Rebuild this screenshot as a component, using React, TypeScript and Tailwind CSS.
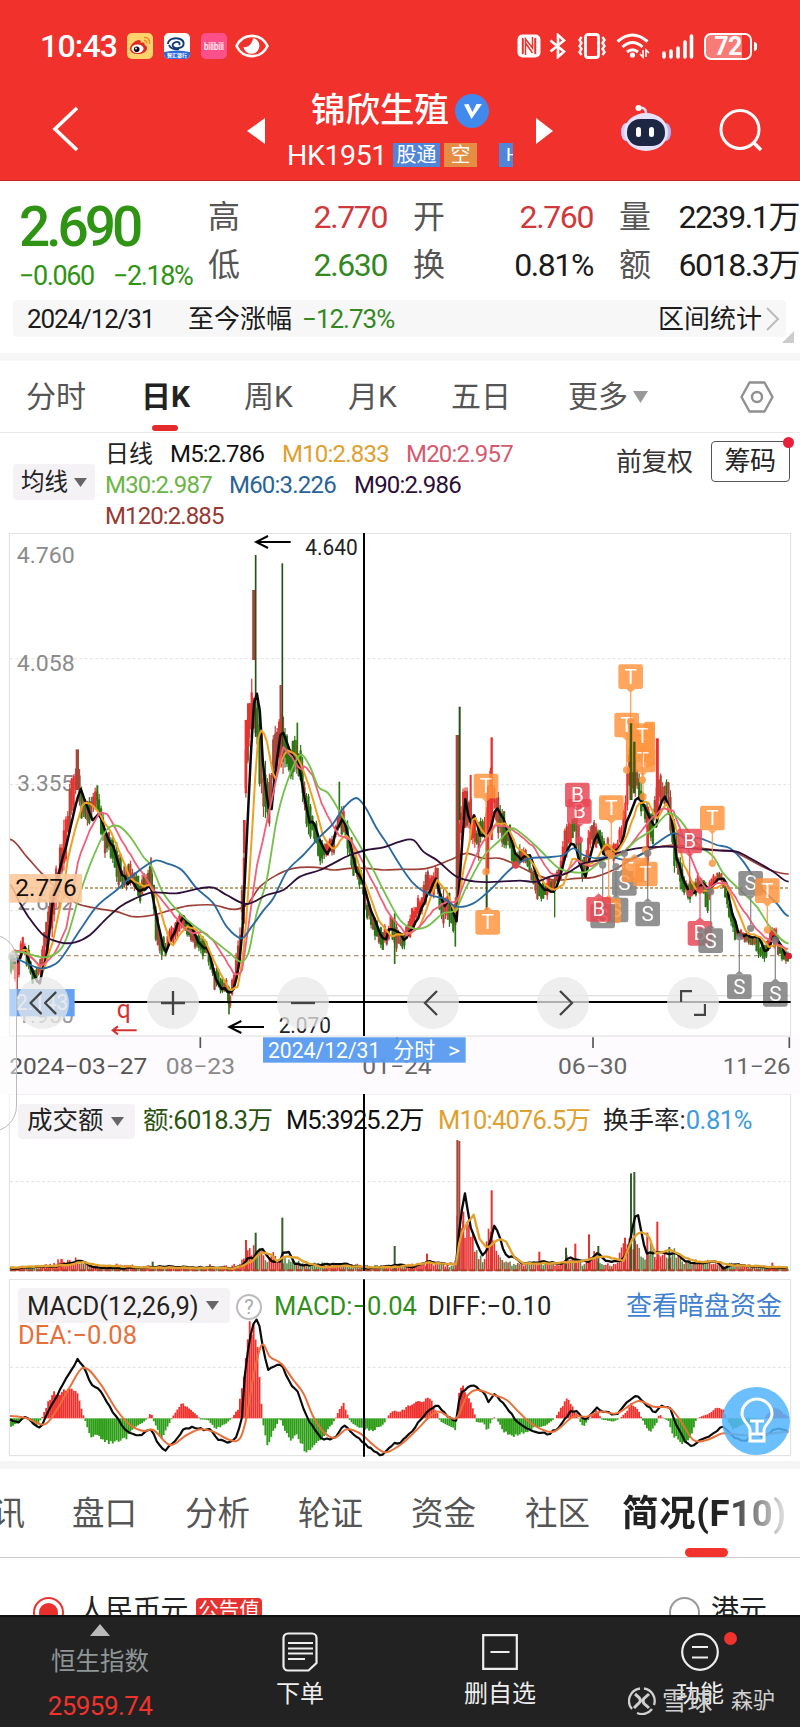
import type { ReactNode } from "react";
import { ChevronsLeft } from "lucide-react";

type Point = [number, number];
type Range = [number, number, number];

// Chart data is kept in thirds of a pixel, one candle every 5.87 units.
const STEP = 5.87;

const m5: Point[] = [[40,670],[55,668],[75,625],[100,700],[118,730],[140,650],[158,480],[175,400],[205,290],[220,220],[240,148],[260,190],[275,245],[300,220],[320,290],[340,320],[365,400],[385,430],[400,425],[415,450],[430,455],[450,430],[465,500],[480,580],[495,648],[510,610],[530,560],[550,530],[575,560],[600,615],[628,630],[645,710],[665,745],[695,760],[715,700],[728,560],[740,300],[752,50],[765,-155],[778,-120],[785,20],[800,180],[812,235],[825,100],[845,-35],[860,0],[880,60],[895,60],[915,190],[930,250],[945,250],[960,300],[980,340],[1000,310],[1010,265],[1030,235],[1050,300],[1070,400],[1090,430],[1110,500],[1130,560],[1155,608],[1170,565],[1195,575],[1210,600],[1235,570],[1260,520],[1285,460],[1308,415],[1330,500],[1350,480],[1370,545],[1380,400],[1396,180],[1410,250],[1425,220],[1440,285],[1460,295],[1475,250],[1490,195],[1510,240],[1530,290],[1545,340],[1560,355],[1590,340],[1605,400],[1625,440],[1650,460],[1670,440],[1690,370],[1710,305],[1725,310],[1740,370],[1755,415],[1770,350],[1790,275],[1810,340],[1830,345],[1850,330],[1865,310],[1885,230],[1910,165],[1930,190],[1950,235],[1965,270],[1980,200],[1998,165],[2015,230],[2030,350],[2045,400],[2065,455],[2080,465],[2110,430],[2125,455],[2150,425],[2175,410],[2195,510],[2215,575],[2245,590],[2275,595],[2300,640],[2325,585],[2345,620],[2365,655]];
const m10: Point[] = [[35,635],[80,630],[110,670],[130,695],[160,600],[185,480],[205,350],[230,250],[250,188],[275,190],[300,225],[335,280],[365,350],[390,415],[430,440],[450,435],[470,470],[490,540],[515,622],[540,580],[560,560],[590,570],[620,610],[650,680],[690,752],[715,740],[735,600],[755,300],[772,0],[785,-35],[800,0],[815,80],[825,125],[845,60],[862,30],[885,40],[910,90],[940,180],[970,290],[1000,330],[1035,285],[1055,300],[1080,390],[1110,470],[1140,550],[1175,588],[1195,585],[1230,580],[1260,560],[1290,480],[1310,420],[1340,455],[1370,530],[1390,390],[1410,300],[1420,220],[1440,265],[1465,295],[1490,250],[1520,250],[1550,320],[1575,340],[1600,370],[1630,430],[1660,450],[1690,435],[1720,350],[1750,375],[1780,370],[1820,310],[1850,340],[1880,290],[1915,190],[1945,185],[1970,240],[2000,190],[2025,250],[2050,370],[2090,455],[2130,450],[2175,430],[2200,480],[2240,580],[2280,590],[2305,620],[2340,615],[2366,640]];
const m20: Point[] = [[40,630],[80,640],[125,680],[165,640],[200,560],[235,360],[265,280],[300,215],[325,225],[370,310],[420,390],[455,440],[500,500],[550,560],[575,580],[610,575],[640,600],[680,665],[705,705],[725,700],[745,560],[770,380],[800,250],[830,110],[850,20],[875,50],[900,90],[915,78],[940,110],[965,190],[1000,260],[1020,290],[1050,295],[1090,370],[1130,450],[1165,520],[1200,560],[1220,585],[1260,560],[1300,510],[1340,485],[1370,485],[1400,410],[1440,320],[1485,255],[1520,260],[1560,285],[1600,320],[1650,400],[1690,405],[1730,360],[1770,380],[1820,355],[1870,340],[1910,290],[1950,240],[1990,205],[2020,210],[2060,320],[2100,420],[2120,450],[2150,430],[2180,430],[2230,510],[2270,570],[2305,600],[2366,628]];
const m30: Point[] = [[45,635],[80,640],[135,652],[180,630],[205,580],[240,460],[280,350],[320,270],[355,258],[390,290],[430,350],[455,380],[490,460],[550,530],[600,570],[640,600],[690,640],[722,665],[745,640],[770,520],[800,420],[830,240],[860,130],[900,45],[930,80],[955,140],[985,160],[1025,225],[1070,300],[1120,390],[1150,450],[1200,540],[1240,565],[1280,560],[1330,520],[1365,510],[1400,440],[1450,350],[1500,300],[1535,265],[1570,285],[1620,330],[1670,380],[1710,395],[1760,395],[1810,360],[1860,345],[1910,300],[1955,270],[2005,220],[2040,240],[2090,310],[2140,350],[2170,400],[2220,450],[2270,500],[2310,560],[2366,610]];
const m60: Point[] = [[40,655],[80,670],[120,685],[150,680],[180,660],[240,570],[290,500],[350,450],[400,405],[465,362],[500,370],[545,390],[590,445],[640,490],[680,560],[725,595],[755,560],[790,512],[820,475],[860,395],[910,345],[960,290],[1000,250],[1030,205],[1068,174],[1095,200],[1130,265],[1160,310],[1200,375],[1240,430],[1290,465],[1330,475],[1370,500],[1420,490],[1470,450],[1540,380],[1590,355],[1640,352],[1690,345],[1720,325],[1750,345],[1790,355],[1830,350],[1880,360],[1930,340],[1970,310],[2020,280],[2060,295],[2100,295],[2150,315],[2190,325],[2230,365],[2280,440],[2330,490],[2366,528]];
const m90: Point[] = [[30,435],[55,480],[85,530],[130,585],[180,607],[225,607],[270,585],[320,535],[360,500],[400,478],[455,458],[530,460],[600,445],[640,443],[680,465],[740,492],[800,465],[850,450],[900,410],[960,390],[1000,370],[1050,345],[1100,330],[1150,322],[1200,305],[1240,300],[1270,335],[1310,360],[1370,410],[1430,425],[1500,425],[1560,422],[1610,425],[1650,410],[1700,400],[1750,370],[1800,360],[1850,340],[1910,325],[2000,320],[2070,325],[2160,332],[2210,335],[2260,360],[2320,395],[2366,425]];
const m120: Point[] = [[30,298],[80,350],[125,400],[170,445],[230,490],[290,505],[350,515],[400,530],[460,525],[530,505],[570,497],[640,495],[700,508],[740,495],[780,440],[830,405],[880,385],[950,382],[1000,390],[1050,385],[1100,385],[1150,390],[1200,388],[1280,385],[1350,360],[1400,340],[1450,355],[1500,355],[1560,380],[1600,400],[1660,420],[1730,415],[1780,412],[1840,390],[1900,355],[1960,325],[2020,315],[2080,322],[2150,330],[2200,335],[2260,365],[2310,390],[2366,402]];

// x, high, low
const prices: Range[] = [[30,630,700],[40,625,720],[52,650,770],[66,576,640],[85,600,700],[100,680,745],[118,650,720],[130,590,700],[142,480,660],[160,400,600],[182,290,480],[195,190,380],[215,95,260],[232,28,180],[245,130,250],[262,170,290],[280,140,250],[292,135,220],[310,220,350],[330,250,370],[350,300,440],[370,360,470],[392,360,440],[405,390,460],[420,410,510],[440,390,450],[453,352,450],[465,450,600],[478,550,670],[495,590,660],[515,550,630],[540,505,580],[560,530,600],[577,535,610],[600,570,670],[620,600,660],[640,640,750],[660,700,770],[680,710,770],[690,740,820],[705,660,740],[717,570,700],[725,400,620],[732,240,560],[738,-60,160],[745,-130,50],[755,-185,0],[770,-120,60],[780,-140,200],[790,0,280],[797,60,330],[810,80,260],[820,-40,200],[830,-60,100],[845,-100,100],[860,-20,130],[875,0,130],[890,-30,130],[905,0,210],[920,120,320],[935,200,290],[950,240,350],[962,290,385],[980,300,355],[1000,270,360],[1015,190,280],[1030,190,290],[1045,250,370],[1065,330,430],[1085,380,460],[1100,470,540],[1120,510,600],[1143,560,640],[1160,540,620],[1175,520,590],[1185,530,640],[1200,560,640],[1210,550,650],[1220,550,610],[1240,490,580],[1265,440,540],[1280,370,500],[1300,380,480],[1310,370,450],[1325,420,570],[1345,450,560],[1365,490,610],[1372,120,530],[1390,90,300],[1400,130,310],[1412,150,300],[1425,220,330],[1435,240,370],[1450,220,320],[1460,140,370],[1470,80,300],[1483,100,230],[1492,150,320],[1515,200,330],[1530,250,360],[1548,320,420],[1562,310,370],[1580,320,380],[1595,370,440],[1610,400,480],[1635,420,490],[1660,400,460],[1680,350,440],[1695,240,390],[1710,240,330],[1725,200,300],[1735,220,380],[1750,340,460],[1765,260,390],[1780,230,320],[1795,240,340],[1810,290,360],[1825,290,360],[1840,300,380],[1855,270,340],[1868,220,300],[1880,90,260],[1890,-50,200],[1900,0,190],[1912,50,200],[1925,120,240],[1940,180,280],[1955,200,340],[1970,100,250],[1980,50,200],[1990,140,200],[2000,110,200],[2010,130,300],[2020,200,400],[2035,330,440],[2050,380,470],[2075,420,495],[2095,390,460],[2110,400,470],[2122,430,530],[2140,400,450],[2155,380,430],[2170,400,450],[2185,440,540],[2200,520,600],[2220,560,610],[2240,570,620],[2260,580,620],[2285,600,680],[2300,600,670],[2315,530,620],[2328,550,640],[2345,600,680],[2366,630,670]];

const volumes: Point[] = [[30,12],[60,16],[120,12],[180,32],[230,40],[250,25],[300,15],[350,18],[460,14],[620,12],[720,20],[735,60],[770,75],[785,70],[800,30],[820,50],[840,40],[900,25],[1000,20],[1190,15],[1250,20],[1290,30],[1364,15],[1370,160],[1400,150],[1412,170],[1425,60],[1450,40],[1465,120],[1480,90],[1500,50],[1520,30],[1550,20],[1620,30],[1680,20],[1700,40],[1730,35],[1750,20],[1780,55],[1800,30],[1840,20],[1870,70],[1890,110],[1910,80],[1930,45],[1950,80],[1965,40],[2000,50],[2020,60],[2050,30],[2120,30],[2160,15],[2200,25],[2250,14],[2366,10]];
const volM5: Point[] = [[30,535],[170,528],[200,520],[242,512],[280,532],[350,535],[480,530],[700,535],[730,525],[748,500],[762,505],[775,480],[788,475],[800,495],[815,515],[840,515],[850,485],[870,487],[882,522],[920,525],[1040,522],[1100,535],[1200,524],[1230,532],[1290,515],[1360,524],[1369,520],[1380,390],[1396,302],[1408,400],[1430,460],[1450,500],[1468,465],[1483,408],[1497,430],[1510,480],[1522,500],[1545,502],[1565,520],[1630,515],[1690,522],[1705,502],[1765,515],[1795,488],[1820,515],[1865,512],[1885,480],[1902,390],[1912,365],[1925,430],[1937,490],[1990,485],[2008,495],[2025,488],[2050,510],[2080,520],[2150,515],[2170,535],[2200,522],[2260,530],[2366,535]];
const volM10: Point[] = [[30,533],[200,525],[245,516],[300,527],[480,533],[700,535],[735,525],[760,510],[785,485],[815,495],[830,515],[855,498],[895,505],[920,518],[970,532],[1040,527],[1100,532],[1200,530],[1290,518],[1368,524],[1380,440],[1400,400],[1423,372],[1435,440],[1460,475],[1480,460],[1498,446],[1520,455],[1540,500],[1570,520],[1660,520],[1750,512],[1810,498],[1870,512],[1895,450],[1920,425],[1945,435],[1965,490],[2010,480],[2050,500],[2090,515],[2150,515],[2190,525],[2260,528],[2366,533]];

const hist: Point[] = [[30,-25],[60,-10],[75,5],[90,-10],[110,-25],[130,10],[145,50],[165,78],[180,70],[200,92],[230,85],[250,10],[255,-5],[270,-55],[290,-45],[310,-70],[350,-72],[380,-60],[400,-30],[430,-12],[445,3],[453,20],[458,0],[470,-30],[485,-60],[505,-20],[520,8],[545,43],[570,30],[595,5],[600,-3],[625,-5],[645,-30],[670,-22],[695,0],[715,30],[730,120],[745,260],[762,280],[775,180],[787,10],[790,-20],[803,-92],[820,-40],[840,2],[850,-25],[870,-65],[890,-50],[920,-105],[950,-75],[980,-40],[1005,-5],[1012,15],[1030,45],[1045,5],[1050,-8],[1070,-25],[1115,-37],[1150,-20],[1163,5],[1180,25],[1200,20],[1240,45],[1290,60],[1315,10],[1320,-10],[1345,-20],[1367,-35],[1372,20],[1380,98],[1400,80],[1425,10],[1430,-12],[1450,-12],[1462,-40],[1475,-5],[1485,5],[1495,-10],[1510,-40],[1540,-55],[1570,-45],[1600,-30],[1640,-20],[1665,0],[1700,60],[1730,15],[1740,-10],[1750,-25],[1765,-5],[1790,25],[1805,-3],[1840,-10],[1860,0],[1880,20],[1895,45],[1915,25],[1925,0],[1950,-45],[1970,-15],[1978,15],[1990,0],[2005,-8],[2020,-50],[2050,-80],[2075,-50],[2090,0],[2130,15],[2155,35],[2170,25],[2180,0],[2200,-35],[2220,-20],[2245,-20],[2290,-3],[2300,10],[2325,35],[2350,15],[2366,5]];
const diff: Point[] = [[30,990],[60,995],[75,980],[90,990],[115,1015],[130,1000],[150,950],[175,910],[200,860],[233,808],[250,830],[275,885],[300,900],[340,970],[385,1030],[420,1035],[455,1015],[475,1065],[495,1082],[520,1060],[550,1020],[580,1010],[605,1018],[630,1020],[655,1050],[685,1058],[710,1040],[725,990],[735,850],[750,740],[765,683],[780,710],[790,780],[805,840],[820,830],[845,823],[870,880],[895,910],[920,980],[945,1020],[970,1050],[1005,1045],[1030,1005],[1050,1020],[1090,1060],[1145,1097],[1180,1060],[1200,1060],[1230,1030],[1270,980],[1310,942],[1330,965],[1367,1000],[1380,910],[1415,883],[1450,905],[1465,935],[1485,912],[1515,945],[1550,995],[1590,1020],[1645,1033],[1680,1010],[1710,965],[1730,960],[1755,990],[1790,955],[1815,965],[1850,975],[1880,935],[1912,918],[1940,945],[1965,968],[1985,945],[2010,955],[2030,1010],[2060,1060],[2080,1068],[2105,1045],[2130,1040],[2170,1008],[2200,1040],[2235,1055],[2260,1030],[2285,1040],[2330,1015],[2366,1025]];
const dea: Point[] = [[30,978],[80,985],[135,1003],[170,960],[210,890],[250,833],[300,880],[350,960],[390,1005],[430,1023],[460,1020],[510,1065],[560,1035],[600,1018],[640,1025],[690,1050],[720,1045],[740,980],[760,860],[785,765],[810,800],[845,822],[880,870],[910,910],[940,980],[975,1030],[1005,1043],[1040,1018],[1080,1030],[1120,1065],[1155,1087],[1200,1065],[1250,1020],[1310,965],[1368,985],[1400,920],[1430,900],[1480,915],[1520,930],[1560,970],[1600,1005],[1660,1025],[1720,980],[1760,980],[1800,965],[1850,970],[1915,933],[1960,950],[2010,955],[2040,990],[2080,1050],[2120,1050],[2170,1030],[2220,1035],[2280,1035],[2366,1025]];

const RED = "#e8322f";
const BROWN = "#a4493a";
const GREEN = "#2b7413";

const rand = (n: number) => {
  const s = Math.sin(n * 127.1 + 11.7) * 43758.5453;
  return s - Math.floor(s);
};

function at(data: number[][], x: number, col: number) {
  const i = data.findIndex((p) => p[0] >= x);
  if (i === -1) return data[data.length - 1][col];
  if (i === 0) return data[0][col];
  const a = data[i - 1];
  const b = data[i];
  return a[col] + ((b[col] - a[col]) * (x - a[0])) / (b[0] - a[0]);
}

// Smooth curve through the points; tangents follow the x distance.
function curve(p: Point[]) {
  let d = `M${p[0][0]} ${p[0][1]}`;
  const slope = (i: number) => {
    if (i === 0 || i === p.length - 1) return 0;
    return (p[i + 1][1] - p[i - 1][1]) / (p[i + 1][0] - p[i - 1][0]);
  };
  for (let i = 1; i < p.length; i++) {
    const h = (p[i][0] - p[i - 1][0]) / 3;
    d += `C${p[i - 1][0] + h} ${(p[i - 1][1] + slope(i - 1) * h).toFixed(1)} ${p[i][0] - h} ${(p[i][1] - slope(i) * h).toFixed(1)} ${p[i][0]} ${p[i][1]}`;
  }
  return d;
}

// Fast averages: straight day-to-day segments with a little wobble.
function jagged(p: Point[], amp: number) {
  const pts: string[] = [];
  for (let x = p[0][0]; x < p[p.length - 1][0]; x += STEP * 1.5) {
    pts.push(`${x.toFixed(1)} ${(at(p, x, 1) + (rand(x) - 0.5) * amp).toFixed(1)}`);
  }
  return `M${pts.join("L")}`;
}

const xs = Array.from({ length: 398 }, (_, i) => 33 + i * STEP);

const candles = xs.map((x, i) => {
  const high = at(prices, x, 1);
  const low = at(prices, x, 2);
  const h = low - high;
  const trend = at(m5, x + 8, 1) - at(m5, x - 8, 1);
  const up = trend + (rand(i + 400) - 0.5) * 45 < 0;
  const top = high + h * 0.35 * rand(i);
  const bottom = low - h * 0.35 * rand(i + 900);
  const body = (bottom - top) * 0.25;
  return { x, top, bottom, bt: top + body * rand(i + 50), bb: bottom - body * rand(i + 70), color: up ? (rand(i + 5) > 0.3 ? RED : BROWN) : rand(i + 6) > 0.25 ? GREEN : BROWN };
});

type Bar = { x: number; y1: number; y2: number; w: number; c: string };
const spikes: Bar[] = [
  { x: 232, y1: 28, y2: 150, w: 10, c: BROWN },
  { x: 292, y1: 136, y2: 210, w: 6, c: GREEN },
  { x: 453, y1: 352, y2: 430, w: 5, c: BROWN },
  { x: 738, y1: -60, y2: 160, w: 8, c: RED },
  { x: 745, y1: -110, y2: 20, w: 8, c: RED },
  { x: 761, y1: -450, y2: -240, w: 9, c: BROWN },
  { x: 767, y1: -555, y2: -10, w: 5, c: "#24521a" },
  { x: 847, y1: -530, y2: 60, w: 5, c: "#24521a" },
  { x: 842, y1: -165, y2: 40, w: 7, c: BROWN },
  { x: 733, y1: 240, y2: 340, w: 8, c: RED },
  { x: 687, y1: 740, y2: 823, w: 5, c: GREEN },
  { x: 892, y1: -52, y2: 60, w: 5, c: GREEN },
  { x: 1018, y1: 125, y2: 220, w: 5, c: GREEN },
  { x: 1184, y1: 520, y2: 672, w: 5, c: GREEN },
  { x: 1366, y1: 540, y2: 620, w: 5, c: GREEN },
  { x: 1372, y1: -15, y2: 500, w: 10, c: BROWN },
  { x: 1379, y1: -100, y2: 240, w: 6, c: "#24521a" },
  { x: 1475, y1: -8, y2: 300, w: 7, c: RED },
  { x: 1412, y1: 105, y2: 280, w: 6, c: RED },
  { x: 1460, y1: 290, y2: 510, w: 6, c: "#24521a" },
  { x: 1464, y1: 140, y2: 400, w: 8, c: RED },
  { x: 1664, y1: 420, y2: 532, w: 4, c: GREEN },
  { x: 1972, y1: -5, y2: 230, w: 9, c: RED },
  { x: 1893, y1: -50, y2: 180, w: 9, c: "#2d5c10" },
  { x: 1903, y1: 5, y2: 160, w: 7, c: "#2d5c10" },
  { x: 1943, y1: 200, y2: 375, w: 8, c: RED },
];

const volSpikes: [number, number, string][] = [[738,93,RED],[767,115,"#35602b"],[847,160,"#35602b"],[1184,75,"#35602b"],[1281,52,RED],[1372,393,BROWN],[1378,390,BROWN],[1390,178,RED],[1475,242,RED],[1618,58,RED],[1698,70,"#35602b"],[1726,82,RED],[1767,110,RED],[1795,75,"#35602b"],[1875,100,RED],[1893,293,"#35602b"],[1903,297,"#35602b"],[1942,115,RED],[1972,148,RED],[2008,72,"#35602b"],[2317,25,RED],[458,28,"#35602b"],[184,36,RED],[350,22,RED],[630,20,RED]];

const kinds = { T: "#ff9440", B: "#e94755", S: "#7d7d7d" };
type Mark = { k: keyof typeof kinds; x: number; y: number; dir: -1 | 1; to?: number };
// dir 1: pointer below the box, dir -1: pointer above
const marks: Mark[] = [
  { k: "T", x: 1929, y: 60, dir: 1, to: 170 },
  { k: "T", x: 1880, y: -45, dir: 1, to: 90 },
  { k: "T", x: 1927, y: -13, dir: 1, to: 120 },
  { k: "T", x: 1892, y: -190, dir: 1, to: -55 },
  { k: "T", x: 1458, y: 138, dir: 1, to: 395 },
  { k: "T", x: 1463, y: 547, dir: -1 },
  { k: "B", x: 1738, y: 214, dir: 1, to: 300 },
  { k: "B", x: 1732, y: 165, dir: 1 },
  { k: "T", x: 1834, y: 203, dir: 1, to: 345 },
  { k: "S", x: 1873, y: 430, dir: -1, to: 340 },
  { k: "T", x: 1903, y: 390, dir: -1 },
  { k: "T", x: 1936, y: 402, dir: -1, to: 330 },
  { k: "S", x: 1848, y: 510, dir: -1, to: 380 },
  { k: "T", x: 1826, y: 512, dir: -1, to: 340 },
  { k: "S", x: 1808, y: 528, dir: -1, to: 375 },
  { k: "B", x: 1796, y: 508, dir: -1 },
  { k: "S", x: 1943, y: 522, dir: -1, to: 340 },
  { k: "B", x: 2069, y: 303, dir: 1, to: 460 },
  { k: "T", x: 2137, y: 234, dir: 1, to: 370 },
  { k: "B", x: 2100, y: 580, dir: -1, to: 450 },
  { k: "S", x: 2132, y: 602, dir: -1, to: 455 },
  { k: "S", x: 2218, y: 740, dir: -1, to: 590 },
  { k: "S", x: 2326, y: 763, dir: -1, to: 600 },
  { k: "S", x: 2252, y: 430, dir: 1, to: 565 },
  { k: "T", x: 2302, y: 452, dir: 1, to: 570 },
];

function TradeMark({ k, x, y, dir, to }: Mark) {
  const c = kinds[k];
  const edge = y + dir * 37;
  return (
    <g opacity={0.84}>
      {to !== undefined && (
        <>
          <path d={`M${x} ${edge}V${to}`} stroke={c} strokeWidth={4} />
          <circle cx={x} cy={to} r={11} fill={c} />
        </>
      )}
      <rect x={x - 37} y={y - 37} width={74} height={74} rx={7} fill={c} />
      <path d={`M${x - 13} ${edge}h26l-13 ${dir * 11}z`} fill={c} />
      <text x={x} y={y + 21} fontSize={62} fill="#fff" textAnchor="middle">{k}</text>
    </g>
  );
}

function Label({ x, y, w, size = 67, fill, children }: { x: number; y: number; w: number; size?: number; fill: string; children: ReactNode }) {
  return (
    <text x={x} y={y} fontSize={size} fill={fill} textLength={w} lengthAdjust="spacingAndGlyphs">
      {children}
    </text>
  );
}

const Caret = ({ className = "" }: { className?: string }) => (
  <svg viewBox="0 0 14 9" className={className} preserveAspectRatio="none"><path d="M0 0h14l-7 9z" fill="currentColor" /></svg>
);

function StatusBar() {
  return (
    <div className="flex h-[92px] items-center pl-[40px] pr-[43px] text-white">
      <span className="w-[87px] text-[32px] font-medium leading-none tracking-[-0.8px]">10:43</span>
      <svg viewBox="0 0 26 26" className="size-[26px]">
        <rect width="26" height="26" rx="5" fill="#ffd36b" />
        <path d="M3 16c0-5 6-9 9-9 2 0 2 2 1.500 3 3-1 5 0 4 2 2 .5 3 2 2.500 4-.8 3-4.500 5-9 5-4.500 0-8-2-8-5z" fill="#e02a24" />
        <ellipse cx="10.500" cy="15.800" rx="6" ry="4.200" fill="#fff" />
        <circle cx="9.700" cy="16.300" r="2.800" fill="#111" />
        <circle cx="9" cy="15.500" r=".9" fill="#fff" />
        <path d="M17 4.500c4-.5 6.500 2.500 5.500 6.500M17 7.500c2 0 3 1 2.800 3" fill="none" stroke="#f0892b" strokeWidth="1.400" />
      </svg>
      <svg viewBox="0 0 26 26" className="ml-[11px] size-[26px]">
        <rect width="26" height="26" rx="5" fill="#fff" />
        <path d="M0 19q13-3 26 0v2a5 5 0 0 1-5 5H5a5 5 0 0 1-5-5z" fill="#2f6bd8" />
        <g fill="none" stroke="#123a78" strokeWidth="1.900"><path d="M4 11c0-5 7-7 12-5s5 8-1 9-8-3-5-5 7-1 5 2" /><path d="M5 12c1 3 5 5 10 4" /></g>
        <text x="13" y="24" fontSize="5" fontWeight="700" textAnchor="middle" fill="#fff">智汇银行</text>
      </svg>
      <svg viewBox="0 0 26 26" className="ml-[11px] size-[26px]">
        <rect width="26" height="26" rx="5" fill="#fb5089" />
        <text x="13" y="17" fontSize="11" fontWeight="500" textAnchor="middle" fill="#fff" textLength="20" lengthAdjust="spacingAndGlyphs">bilibili</text>
      </svg>
      <svg viewBox="0 0 34 24" className="ml-[8px] h-[24px] w-[34px]">
        <path d="M1.500 12C8 -1.500 26 -1.500 32.500 12 26 25.500 8 25.500 1.500 12z" fill="none" stroke="#fff" strokeWidth="2.600" />
        <path d="M18 4a8 8 0 1 1-9.500 9c4 1 9-3 9.500-9z" fill="#fff" />
      </svg>

      <div className="ml-auto flex items-center">
        <svg viewBox="0 0 24 24" className="size-[24px]">
          <rect x=".5" y=".5" width="23" height="23" rx="5" fill="#fff" />
          <path d="M4.800 3.500l2 1v15l-2 1zM19.200 3.500l-2 1v15l2 1z" fill="#f0312c" />
          <path d="M8.500 21V5l7 9V3M8.500 9l7 10" fill="none" stroke="#f0312c" strokeWidth="1.500" />
        </svg>
        <svg viewBox="0 0 18 26" className="ml-[8px] h-[26px] w-[18px]" fill="none" stroke="#fff" strokeWidth="2.600">
          <path d="M1.500 7.500L15 18.500 9 24V2l6 5.500L1.500 18.500" />
        </svg>
        <svg viewBox="0 0 32 26" className="ml-[9px] h-[26px] w-[32px]" fill="none" stroke="#fff">
          <rect x="9.500" y="1.500" width="13" height="23" rx="2.500" strokeWidth="2.800" />
          <path d="M5.500 4l-2 3 2 3-2 3 2 3-2 3 2 3M26.500 4l2 3-2 3 2 3-2 3 2 3-2 3" strokeWidth="2.400" />
        </svg>
        <svg viewBox="0 0 34 26" className="ml-[8px] h-[26px] w-[34px]" fill="none" stroke="#fff" strokeWidth="3">
          <path d="M1.500 8.500q15-13 30 0M6.500 14q10-9 20 0M11 19q5.500-4.500 11 0" />
          <circle cx="16.500" cy="22" r="2.600" fill="#fff" stroke="none" />
          <path d="M27 17v7l-3-3M30 24v-7l3 3" strokeWidth="1.600" />
        </svg>
        <svg viewBox="0 0 32 26" className="ml-[12px] h-[26px] w-[32px]" stroke="#fff" strokeWidth="3.600" strokeLinecap="round">
          <path d="M2 24v-4M9 24v-6M16 24V15M23 24V9M29.500 24V3" />
        </svg>
        <div className="ml-[10px] flex h-[27px] w-[48px] items-center justify-center rounded-[7px] border-2 border-white bg-[linear-gradient(90deg,#f97b78_82%,#f0312c_82%)] text-[25px] font-bold leading-none tracking-[-0.5px]">
          72
        </div>
        <div className="ml-[2px] h-[9px] w-[3px] rounded-r bg-white" />
      </div>
    </div>
  );
}

function TitleBar() {
  return (
    <div className="flex h-[87px] items-start text-white">
      <svg viewBox="0 0 26 46" className="ml-[52px] mt-[14px] h-[46px] w-[26px]"><path d="M25 2L3 23l22 21" fill="none" stroke="#fff" strokeWidth="3.600" /></svg>
      <svg viewBox="0 0 18 26" className="ml-[169px] mt-[26px] h-[26px] w-[18px]"><path d="M18 0v26L0 13z" fill="#fff" /></svg>
      <div className="ml-[22px] w-[228px]">
        <div className="flex items-center pl-[24px]">
          <span className="text-[34.500px] font-medium leading-[37px]">锦欣生殖</span>
          <svg viewBox="0 0 34 34" className="ml-[6px] size-[34px]">
            <circle cx="17" cy="17" r="17" fill="#4289ee" />
            <path d="M9 10.500l4.500-.5 4 8 4-8h5.500L16.500 25z" fill="#fff" />
          </svg>
        </div>
        <div className="mt-[14px] flex h-[24px] items-center leading-none">
          <span className="w-[106px] pt-[3px] text-[28.500px] tracking-[-0.400px]">HK1951</span>
          <span className="flex h-[24px] w-[47px] items-center justify-center bg-[#5085d8] text-[20px]">股通</span>
          <span className="ml-[4px] flex h-[24px] w-[33px] items-center justify-center bg-[#e58d42] text-[20px]">空</span>
          <span className="ml-[22px] h-[24px] w-[14px] overflow-hidden bg-[#5085d8] pl-[7px] text-[19px] leading-[24px]">H</span>
        </div>
      </div>
      <svg viewBox="0 0 17 26" className="ml-[21px] mt-[26px] h-[26px] w-[17px]"><path d="M0 0l17 13L0 26z" fill="#fff" /></svg>
      <svg viewBox="0 0 52 48" className="ml-[67px] mt-[12px] h-[48px] w-[52px]">
        <path d="M26 9q0-6-7-5" fill="none" stroke="#e6dcf5" strokeWidth="2.500" />
        <circle cx="18.500" cy="4" r="3" fill="#fff" />
        <ellipse cx="6" cy="28" rx="5" ry="9" fill="#d3cdf8" />
        <ellipse cx="46" cy="28" rx="5" ry="9" fill="#b9b4f4" />
        <ellipse cx="26" cy="28" rx="22" ry="19" fill="#e7e2fb" />
        <rect x="7" y="15" width="38" height="27" rx="13" fill="#1d2744" />
        <rect x="16" y="23" width="5" height="10" rx="2.500" fill="#fff" />
        <rect x="29" y="23" width="5" height="10" rx="2.500" fill="#fff" />
      </svg>
      <svg viewBox="0 0 44 44" className="ml-[47px] mt-[17px] size-[44px]" fill="none" stroke="#fff" strokeWidth="3"><circle cx="21" cy="20.500" r="19" /><path d="M34 33l8 8" strokeWidth="3.600" /></svg>
    </div>
  );
}

const quotes = [
  { label: "高", value: "2.770", color: "text-[#d0383b]" },
  { label: "开", value: "2.760", color: "text-[#d0383b]" },
  { label: "量", value: "2239.1万", color: "text-[#1b1b1b]" },
  { label: "低", value: "2.630", color: "text-[#33891f]" },
  { label: "换", value: "0.81%", color: "text-[#1b1b1b]" },
  { label: "额", value: "6018.3万", color: "text-[#1b1b1b]" },
];

function Quote() {
  return (
    <section className="h-[172px] pt-[12px]">
      <div className="flex h-[107px]">
        <div className="w-[208px] shrink-0 whitespace-nowrap pl-[19px] text-[#2f9414]">
          <div className="mt-[8px] text-[55px] font-medium leading-[52px] tracking-[-4px]">2.690</div>
          <div className="mt-[8px] flex text-[27px] leading-[30px] tracking-[-1.400px]">
            <span className="w-[94px]">−0.060</span>
            <span>−2.18%</span>
          </div>
        </div>
        <div className="grid h-[96px] grid-cols-[179px_180px_180px] grid-rows-2 gap-x-[26px] whitespace-nowrap text-[32px] leading-[48px]">
          {quotes.map((q) => (
            <div key={q.label} className="flex justify-between">
              <span className="text-[#555]">{q.label}</span>
              <span className={`tracking-[-1.400px] ${q.color}`}>{q.value}</span>
            </div>
          ))}
        </div>
      </div>
      <div className="relative ml-[13px] flex h-[37px] w-[773px] items-center rounded bg-[#f7f7f7] pl-[14px] text-[26px] leading-none text-[#1b1b1b]">
        <span className="w-[161px] tracking-[-1.100px]">2024/12/31</span>
        <span>至今涨幅</span>
        <span className="ml-[10px] tracking-[-1px] text-[#33891f]">−12.73%</span>
        <span className="ml-auto mr-[4px]">区间统计</span>
        <svg viewBox="0 0 14 24" className="mr-[6px] h-[24px] w-[14px]"><path d="M1 1l11 11L1 23" fill="none" stroke="#bbb" strokeWidth="2" /></svg>
        <svg viewBox="0 0 12 12" className="absolute -bottom-[6px] -right-[8px] size-[12px]"><path d="M12 0v12H0z" fill="#ccc" /></svg>
      </div>
    </section>
  );
}

function PeriodTabs() {
  return (
    <nav className="flex h-[72px] items-center border-b border-[#e9e9e9] pl-[26px] pt-px text-[30px] leading-none text-[#555]">
      <span className="w-[115px]">分时</span>
      <span className="relative w-[103px] font-bold text-[#222]">
        日K
        <i className="absolute -bottom-[19px] left-[11px] h-[6px] w-[26px] rounded-full bg-[#e52a2c]" />
      </span>
      <span className="w-[104px]">周K</span>
      <span className="w-[103px]">月K</span>
      <span className="w-[117px]">五日</span>
      <span>更多</span>
      <Caret className="ml-[5px] h-[12px] w-[15px] text-[#999]" />
      <svg viewBox="0 0 34 32" className="ml-[92px] h-[32px] w-[34px]" fill="none" stroke="#909090" strokeWidth="2.400">
        <path d="M9.500 1.500h15L32.500 16l-8 14.500h-15L1.500 16z" strokeLinejoin="round" />
        <circle cx="17" cy="16" r="5" />
      </svg>
    </nav>
  );
}

function MaLegend() {
  return (
    <div className="flex h-[100px] text-[24px] leading-[31px] tracking-[-0.800px]">
      <div className="ml-[13px] mt-[31px] flex h-[36px] w-[82px] items-center rounded bg-[#f5f2f5] pl-[8px] tracking-normal text-[#222]">
        <span className="text-[23.500px]">均线</span>
        <Caret className="ml-[6px] h-[9px] w-[13px] text-[#666]" />
      </div>
      <div className="ml-[10px] mt-[6px] w-[430px]">
        <div className="flex">
          <span className="w-[65px] tracking-normal text-[#222]">日线</span>
          <span className="w-[112px] text-[#111]">M5:2.786</span>
          <span className="w-[124px] text-[#e0a030]">M10:2.833</span>
          <span className="text-[#d55a70]">M20:2.957</span>
        </div>
        <div className="flex">
          <span className="w-[124px] text-[#6ab546]">M30:2.987</span>
          <span className="w-[125px] text-[#28639a]">M60:3.226</span>
          <span className="text-[#2c0f38]">M90:2.986</span>
        </div>
        <div className="tracking-[-0.900px] text-[#973a33]">M120:2.885</div>
      </div>
      <span className="ml-[81px] mt-[14px] text-[26px] tracking-[-0.500px] text-[#333]">前复权</span>
      <div className="relative ml-[18px] mt-[8px] flex h-[41px] w-[79px] items-center justify-center rounded border border-[#555] text-[26px] tracking-[-0.500px] text-[#222]">
        筹码
        <i className="absolute -right-[5px] -top-[5px] size-[11px] rounded-full bg-[#e8203a]" />
      </div>
    </div>
  );
}

const lines: [string, string, number][] = [
  [curve(m120), "#9c4036", 5],
  [jagged(m5, 12), "#0a0a0a", 7.5],
  [jagged(m10, 5), "#f0a020", 6],
  [jagged(m20, 4), "#f0607c", 5.5],
  [curve(m30), "#76c04c", 5.5],
  [curve(m60), "#2a6aa0", 5.5],
  [curve(m90), "#2e0f3a", 5.5],
];

const CircleButton = ({ children }: { children: ReactNode }) => (
  <span className="flex size-[52px] items-center justify-center rounded-full bg-[#e8e8e8]/75">
    <svg viewBox="0 0 26 26" className="size-[26px]" fill="none" stroke="#444" strokeWidth="2.300">{children}</svg>
  </span>
);

function PriceChart() {
  return (
    <div className="relative h-[561px]">
      <svg viewBox="0 -621 2400 1683" className="h-[561px] w-[800px]">
        <rect x="0" y="888" width="2400" height="174" fill="#fdfbfd" />
        <path d="M28 888V-620H2372V888z" fill="none" stroke="#dedede" strokeWidth="3" />
        <path d="M30 -244H2370M30 134H2370M30 512H2370" stroke="#e2e2e2" strokeWidth="3" strokeDasharray="9 7" />
        <path d="M690 767H2370" stroke="#ddd" strokeWidth="4" />
        <Label x={50} y={-530} w={174} fill="#8b8b8b">4.760</Label>
        <Label x={50} y={-208} w={174} fill="#8b8b8b">4.058</Label>
        <Label x={52} y={153} w={170} fill="#8b8b8b">3.355</Label>
        <Label x={52} y={510} w={170} fill="#8b8b8b">2.652</Label>
        <Label x={52} y={850} w={170} fill="#999">1.950</Label>
        <path d="M30 444H2370" stroke="#a58a4a" strokeWidth="4" strokeDasharray="9 6" />
        <path d="M30 647H2370" stroke="#b09068" strokeWidth="3.500" strokeDasharray="14 10" />

        {candles.map((c) => (
          <g key={c.x} fill={c.color}>
            <rect x={c.x - 1.5} y={c.top} width={3.5} height={c.bottom - c.top} />
            <rect x={c.x - 3.2} y={c.bt} width={6.6} height={Math.max(4, c.bb - c.bt)} />
          </g>
        ))}
        {spikes.map((s) => (
          <rect key={s.x} x={s.x - s.w / 2} y={s.y1} width={s.w} height={s.y2 - s.y1} fill={s.c} />
        ))}
        {lines.map(([d, color, width]) => (
          <path key={color} d={d} fill="none" stroke={color} strokeWidth={width} strokeLinejoin="round" />
        ))}

        <path d="M1880 -20h45l10 -35h30v130l-25 10v-20h-60z" fill="#ff8a1c" opacity="0.75" />
        {marks.map((m, i) => <TradeMark key={i} {...m} />)}
        <path d="M1893 -50V170M1903 5V150" stroke="#3d5c10" strokeWidth="7" />
        <circle cx="1547" cy="375" r="11" fill="#d8454a" />
        <circle cx="2366" cy="648" r="10" fill="#d02030" />
        <circle cx="40" cy="650" r="16" fill="#888" opacity=".6" />

        <path d="M1092 -621V888" stroke="#000" strokeWidth="6" />
        <path d="M220 786H2372" stroke="#000" strokeWidth="6" />
        <path d="M872 -594H768M804 -612L768 -594L804 -576" fill="none" stroke="#000" strokeWidth="6" />
        <Label x={916} y={-555} w={157} size={64} fill="#222">4.640</Label>
        <path d="M792 861H688M724 843L688 861L724 879" fill="none" stroke="#000" strokeWidth="6" />
        <Label x={836} y={878} w={157} size={64} fill="#222">2.070</Label>
        <Label x={350} y={835} w={42} size={76} fill="#d23434">q</Label>
        <path d="M410 871H338M354 859L338 871L354 883" fill="none" stroke="#d23434" strokeWidth="6" />

        <rect x="28" y="402" width="218" height="86" fill="#fdc79a" opacity="0.88" />
        <Label x={46} y={468} w={184} size={72} fill="#111">2.776</Label>
        <rect x="28" y="747" width="196" height="82" fill="#5e9df0" opacity="0.95" />
        <Label x={48} y={811} w={157} size={67} fill="#e4eefc">2.143</Label>

        <path d="M601 892v32M1191 892v32M1779 892v32M2368 892v32" stroke="#555" strokeWidth="5" />
        <Label x={28} y={1003} w={414} size={66} fill="#555">2024−03−27</Label>
        <Label x={497} y={1003} w={208} size={66} fill="#8a8a8a">08−23</Label>
        <Label x={1087} y={1003} w={208} size={66} fill="#666">01−24</Label>
        <Label x={1674} y={1003} w={208} size={66} fill="#666">06−30</Label>
        <Label x={2168} y={1003} w={204} size={66} fill="#666">11−26</Label>
        <rect x="789" y="892" width="608" height="76" fill="#5b9bef" opacity="0.96" />
        <Label x={804} y={954} w={337} size={66} fill="#fff">2024/12/31</Label>
        <Label x={1180} y={954} w={126} size={64} fill="#fff">分时</Label>
        <Label x={1344} y={954} w={36} size={66} fill="#fff">&gt;</Label>
      </svg>

      <div className="absolute left-[17px] top-[444px] flex gap-[78px]">
        <span className="flex size-[52px] items-center justify-center rounded-full bg-[#e8e8e8]/75">
          <ChevronsLeft className="size-[50px] text-[#444]" strokeWidth={1.1} />
        </span>
        <CircleButton><path d="M13 1v24M1 13h24" /></CircleButton>
        <CircleButton><path d="M1 13h24" /></CircleButton>
        <CircleButton><path d="M17 1L5 13l12 12" /></CircleButton>
        <CircleButton><path d="M10 1l12 12L10 25" /></CircleButton>
        <CircleButton><path d="M12 1H1v11M14 25h11V14" /></CircleButton>
      </div>
    </div>
  );
}

function VolumeChart() {
  return (
    <div className="relative h-[185px]">
      <div className="flex h-[54px] items-center whitespace-nowrap pl-[18px] text-[25.500px] leading-none">
        <span className="flex h-[35px] w-[117px] items-center rounded bg-[#f5f2f5] pl-[9px] text-[#222]">
          成交额
          <Caret className="ml-[7px] h-[9px] w-[13px] text-[#666]" />
        </span>
        <span className="ml-[8px] w-[143px] tracking-[-0.700px] text-[#2a5312]">额:6018.3万</span>
        <span className="w-[152px] tracking-[-0.900px] text-[#111]">M5:3925.2万</span>
        <span className="w-[165px] tracking-[-0.800px] text-[#e0a030]">M10:4076.5万</span>
        <span className="text-[#222]">换手率:</span>
        <span className="tracking-[-0.400px] text-[#3d9bdc]">0.81%</span>
      </div>
      <svg viewBox="0 12 2400 555" className="absolute left-0 top-0 h-[185px] w-[800px]">
        <path d="M28 543V12H2372V543z" fill="none" stroke="#dedede" strokeWidth="3" />
        <path d="M30 275H2370" stroke="#e2e2e2" strokeWidth="3" strokeDasharray="9 7" />
        {xs.map((x, i) => {
          const h = at(volumes, x, 1) * (0.6 + 0.6 * rand(i + 33));
          return <rect key={x} x={x - 2.2} y={543 - h} width={4.8} height={h} fill={candles[i].color === GREEN ? "#5c8a4e" : RED} />;
        })}
        {volSpikes.map(([x, h, c]) => <rect key={x} x={x - 3} y={543 - h} width={6} height={h} fill={c} />)}
        <path d="M30 541H2370" stroke="#b0402a" strokeWidth="6" strokeDasharray="18 8" />
        <path d={jagged(volM5, 4)} fill="none" stroke="#0a0a0a" strokeWidth="7" strokeLinejoin="round" />
        <path d={jagged(volM10, 3)} fill="none" stroke="#e2a02c" strokeWidth="7" strokeLinejoin="round" />
        <path d="M1092 12V543" stroke="#000" strokeWidth="6" />
      </svg>
    </div>
  );
}

function MacdChart() {
  return (
    <div className="relative h-[182px]">
      <div className="flex h-[44px] items-end whitespace-nowrap pl-[18px] text-[25.500px] leading-[34px]">
        <span className="flex h-[35px] w-[212px] items-center rounded bg-[#f5f2f5] pl-[9px] text-[#222]">
          <span className="w-[171px]">MACD(12,26,9)</span>
          <Caret className="ml-[8px] h-[9px] w-[13px] text-[#666]" />
        </span>
        <span className="mb-[3px] ml-[6px] flex size-[26px] items-center justify-center rounded-full border-2 border-[#bbb] text-[20px] leading-none text-[#aaa]">?</span>
        <span className="ml-[12px] w-[154px] text-[#2f8f1a]">MACD:−0.04</span>
        <span className="tracking-[0.100px] text-[#222]">DIFF:−0.10</span>
        <span className="ml-auto mr-[18px] text-[26px] text-[#4080d0]">查看暗盘资金</span>
      </div>
      <div className="-mt-[3px] pl-[18px] text-[25.500px] leading-[30px] tracking-[0.100px] text-[#e5703c]">DEA:−0.08</div>
      <svg viewBox="0 567 2400 546" className="absolute left-0 top-0 h-[182px] w-[800px]">
        <path d="M28 1097V568H2372V1097z" fill="none" stroke="#dedede" strokeWidth="3" />
        <path d="M30 832H2370" stroke="#e2e2e2" strokeWidth="3" strokeDasharray="9 7" />
        {xs.map((x, i) => {
          const h = at(hist, x, 1) * (0.9 + 0.2 * rand(i + 7));
          return <rect key={x} x={x - 2.8} y={h > 0 ? 985 - h : 985} width={5.6} height={Math.abs(h)} fill={h > 0 ? "#f0302c" : "#2c9d16"} />;
        })}
        <path d={jagged(diff, 6)} fill="none" stroke="#0a0a0a" strokeWidth="6.500" strokeLinejoin="round" />
        <path d={curve(dea)} fill="none" stroke="#e8703a" strokeWidth="6" />
        <path d="M1092 568V1100" stroke="#000" strokeWidth="6" />
      </svg>
      <svg viewBox="0 0 68 68" className="absolute left-[722px] top-[108px] size-[68px]">
        <circle cx="34" cy="34" r="34" fill="#52b5fb" opacity="0.86" />
        <g fill="none" stroke="#fff" strokeWidth="3">
          <path d="M28 43c0-5-8-9-8-16a15 15 0 0 1 30 0c0 7-8 11-8 16v11H28z" />
          <path d="M28 34h14M35 34v13M29 47h13" />
        </g>
      </svg>
    </div>
  );
}

function SectionTabs() {
  return (
    <nav className="flex h-[89px] items-center overflow-hidden border-b border-[#ccc] pt-[3px] text-[32.500px] leading-none text-[#555]">
      <span className="-ml-[40px] w-[112px] shrink-0 whitespace-nowrap">资讯</span>
      <span className="w-[113px] shrink-0">盘口</span>
      <span className="w-[113px] shrink-0">分析</span>
      <span className="w-[113px] shrink-0">轮证</span>
      <span className="w-[114px] shrink-0">资金</span>
      <span className="w-[97px] shrink-0">社区</span>
      <span className="relative shrink-0 text-[36.500px] font-bold">
        <span className="bg-[linear-gradient(90deg,#222_62%,#ddd_98%)] bg-clip-text tracking-[0.600px] text-transparent">简况(F10)</span>
        <i className="absolute -bottom-[24px] left-[63px] h-[9px] w-[43px] rounded-full bg-[#f2322d]" />
      </span>
    </nav>
  );
}

function BottomBar() {
  return (
    <footer className="relative grid h-[112px] grid-cols-4 border-t-2 border-[#111] bg-[#222] text-[24px] leading-none text-[#eee]">
      <div className="flex flex-col items-center pt-[7px]">
        <svg viewBox="0 0 20 12" className="h-[12px] w-[20px]"><path d="M10 0l10 12H0z" fill="#bbb" /></svg>
        <span className="mt-[14px] text-[24.500px] text-[#8f9696]">恒生指数</span>
        <span className="mt-[18px] text-[26px] tracking-[-0.600px] text-[#f0332c]">25959.74</span>
      </div>
      <div className="flex flex-col items-center pt-[15px]">
        <svg viewBox="0 0 36 40" className="h-[40px] w-[36px]" fill="none" stroke="#eee" strokeWidth="2.200">
          <path d="M6 1.500h24a4.500 4.500 0 0 1 4.500 4.500v25l-8 7.500H6A4.500 4.500 0 0 1 1.500 34V6A4.500 4.500 0 0 1 6 1.500z" />
          <path d="M6 11h25M6 16.500h25M6 21.500h25M6 27h17" />
        </svg>
        <span className="mt-[10px]">下单</span>
      </div>
      <div className="flex flex-col items-center pt-[17px]">
        <svg viewBox="0 0 36 36" className="size-[36px]" fill="none" stroke="#eee" strokeWidth="2.200"><path d="M1.200 1.200h33.600v33.600H1.200zM8.500 18h19" /></svg>
        <span className="mt-[12px]">删自选</span>
      </div>
      <div className="relative flex flex-col items-center pt-[16px]">
        <svg viewBox="0 0 38 38" className="size-[38px]" fill="none" stroke="#eee" strokeWidth="2.200"><circle cx="19" cy="19" r="17.800" /><path d="M11 14h16M11 24.500h16" /></svg>
        <span className="mt-[11px]">功能</span>
        <i className="absolute left-[124px] top-[15px] size-[13px] rounded-full bg-[#f0332c]" />
      </div>
      <div className="absolute left-[628px] top-[69px] flex h-[30px] items-center text-[22px] text-[#d0d0d0]">
        <svg viewBox="0 0 28 28" className="size-[28px]" fill="none" stroke="#d0d0d0" strokeWidth="2.300">
          <path d="M12 1.500A12.500 12.500 0 0 0 4 22M9 26a12.500 12.500 0 0 0 15-4M26 18A12.500 12.500 0 0 0 16 1.500" />
          <path d="M7 7l4 3.500q3 3.500-1 6.500L6 21M21 7l-5 4.500q-2 2.500 0 5l5 4.500" strokeWidth="3" />
        </svg>
        <span className="ml-[6px] w-[69px] text-[25px] tracking-[0.500px]">雪球</span>
        <span>森驴</span>
      </div>
    </footer>
  );
}

export default function App() {
  return (
    <div className="relative flex h-[1727px] w-[800px] flex-col overflow-hidden bg-white font-['Roboto','Noto_Sans_CJK_SC',sans-serif]">
      <header className="h-[181px] shrink-0 border-b border-[#c8242a] bg-[#f0312c]">
        <StatusBar />
        <TitleBar />
      </header>
      <Quote />
      <div className="h-[8px] bg-[#f6f6f6]" />
      <PeriodTabs />
      <MaLegend />
      <PriceChart />
      <VolumeChart />
      <MacdChart />
      <div className="h-[8px] bg-[#f5f5f5]" />
      <SectionTabs />
      <div className="flex h-[57px] overflow-hidden whitespace-nowrap pt-[35px] text-[28px] leading-[36px] text-[#222]">
        <span className="ml-[33px] mt-[4px] flex size-[31px] shrink-0 items-center justify-center rounded-full border-2 border-[#e33]">
          <i className="size-[19px] rounded-full bg-[#e8302c]" />
        </span>
        <span className="ml-[14px] w-[118px] tracking-[-0.500px]">人民币元</span>
        <span className="mt-[5px] h-[30px] w-[66px] rounded bg-[#e63331] text-center text-[20.500px] leading-[24px] text-white">公告值</span>
        <span className="ml-[407px] mt-[4px] size-[31px] shrink-0 rounded-full border-2 border-[#999]" />
        <span className="ml-[11px]">港元</span>
      </div>
      <BottomBar />
      <div className="absolute -left-[40px] top-[934px] h-[198px] w-[57px] rounded-[26px] border border-[#bbb] bg-white/50" />
    </div>
  );
}
